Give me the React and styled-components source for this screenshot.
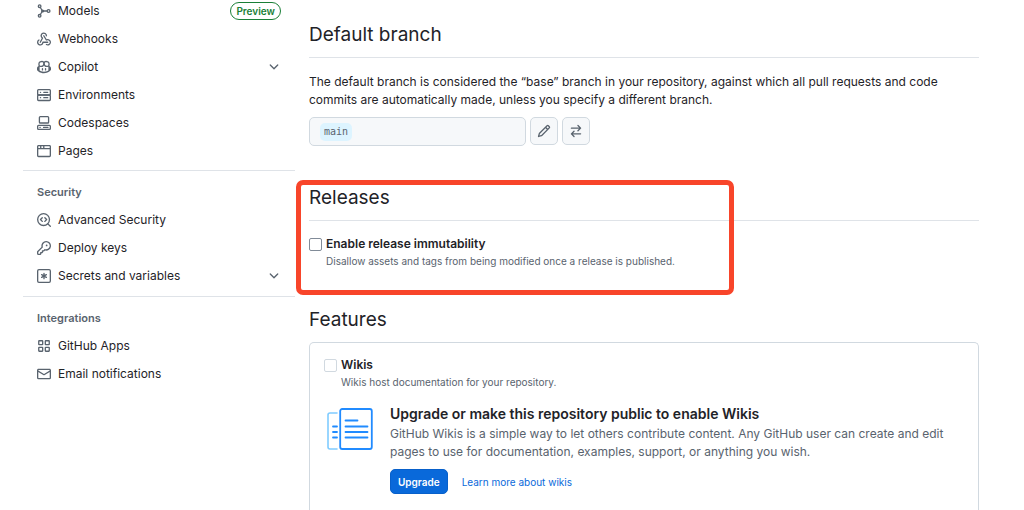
import React, { useState } from 'react';
import styled, { createGlobalStyle } from 'styled-components';

const GlobalStyle = createGlobalStyle`
  * {
    box-sizing: border-box;
  }

  body {
    margin: 0;
    background: #ffffff;
    color: #1f2328;
    font-family: Inter, 'Liberation Sans', sans-serif;
    font-size: 12px;
    line-height: 18px;
  }
`;

const Page = styled.div`
  display: grid;
  grid-template-columns: 272px minmax(0, 1fr);
  column-gap: 14px;
  min-height: 100vh;
  padding: 0 45px 0 23px;
`;

const Sidebar = styled.nav`
  display: flex;
  flex-direction: column;
`;

const NavGroup = styled.section`
  padding: ${(props) => (props.$first ? '1px 0 9px' : '11px 0 10px')};
  border-bottom: ${(props) => (props.$last ? 'none' : '1px solid #dfe3e8')};
`;

const GroupTitle = styled.h3`
  margin: 0 0 8px;
  padding-left: 14px;
  color: #59636e;
  font-size: 11px;
  font-weight: 600;
  line-height: 20px;
`;

const NavList = styled.ul`
  display: flex;
  flex-direction: column;
  gap: 8px;
  margin: 0;
  padding: 0;
  list-style: none;
`;

const NavLink = styled.a`
  display: flex;
  align-items: center;
  gap: 7px;
  height: 20px;
  padding: 0 14px;
  color: #1f2328;
  font-size: 12px;
  text-decoration: none;

  svg {
    flex: none;
    color: #59636e;
  }

  .end {
    margin-left: auto;
  }
`;

const PreviewLabel = styled.span`
  height: 18px;
  margin-left: auto;
  padding: 0 5px;
  border: 1px solid #1a7f37;
  border-radius: 9px;
  color: #1a7f37;
  font-size: 10px;
  font-weight: 600;
  line-height: 16px;
`;

const Main = styled.main`
  display: flex;
  flex-direction: column;
  padding-top: 21px;
`;

const Heading = styled.h2`
  margin: 0;
  padding-bottom: 8px;
  border-bottom: ${(props) => (props.$plain ? 'none' : '1px solid #dfe3e8')};
  font-size: 19px;
  font-weight: 400;
  line-height: 28px;
`;

const Section = styled.section`
  position: relative;
  display: flex;
  flex-direction: column;
`;

const Intro = styled.p`
  margin: 15px 0 8px;
`;

const BranchRow = styled.div`
  display: flex;
  gap: 4px;
  margin-bottom: 38px;
`;

const BranchField = styled.div`
  display: flex;
  align-items: center;
  width: 217px;
  height: 29px;
  padding: 0 10px;
  border: 1px solid #d1d9e0;
  border-radius: 5px;
  background: #f6f8fa;
`;

const BranchName = styled.code`
  padding: 0 4px;
  border-radius: 5px;
  background: #ddf4ff;
  color: #59636e;
  font-family: 'DejaVu Sans Mono', 'Liberation Mono', monospace;
  font-size: 10px;
`;

const IconButton = styled.button`
  display: flex;
  align-items: center;
  justify-content: center;
  width: 28px;
  height: 28px;
  padding: 0;
  border: 1px solid #d1d9e0;
  border-radius: 5px;
  background: #f6f8fa;
  color: #59636e;
  cursor: pointer;
`;

/* Red frame drawn over the releases section */
const Highlight = styled.div`
  position: absolute;
  top: -4px;
  bottom: 11px;
  left: -13px;
  width: 438px;
  border: 5px solid #f8452a;
  border-radius: 7px;
  pointer-events: none;
`;

const Option = styled.div`
  display: grid;
  grid-template-columns: 13px 1fr;
  column-gap: 4px;
  align-items: center;

  label {
    font-weight: 600;
  }

  p {
    grid-column: 2;
    margin: 0;
    color: #59636e;
    font-size: 10px;
    line-height: 16px;
  }
`;

const Checkbox = styled.input`
  appearance: none;
  width: 13px;
  height: 13px;
  margin: 0;
  border: 1px solid #818b98;
  border-radius: 2px;
  background: #ffffff;

  &:checked {
    background: #0969da;
    border-color: #0969da;
  }

  &:disabled {
    border-color: #d1d9e0;
  }
`;

const ReleaseBody = styled.div`
  padding: 14px 0 37px;
`;

const FeatureCard = styled.div`
  flex: 1;
  padding: 13px 14px 0;
  border: 1px solid #d1d9e0;
  border-bottom: none;
  border-radius: 5px 5px 0 0;
`;

const Upsell = styled.div`
  display: flex;
  gap: 17px;
  margin-top: 14px;
  padding-left: 3px;

  > svg {
    flex: none;
    margin-top: 4px;
  }

  h4 {
    margin: 0;
    font-size: 14px;
    font-weight: 600;
    line-height: 20px;
  }

  p {
    margin: 1px 0 8px;
    color: #59636e;
  }
`;

const Actions = styled.div`
  display: flex;
  align-items: center;
  gap: 14px;

  a {
    color: #0969da;
    font-size: 10px;
    text-decoration: none;
  }
`;

const UpgradeButton = styled.button`
  height: 25px;
  padding: 0 7px;
  border: 1px solid #0860ca;
  border-radius: 5px;
  background: #0969da;
  color: #ffffff;
  font-family: inherit;
  font-size: 10px;
  font-weight: 600;
  cursor: pointer;
`;

const Icon = ({ children, className }) => (
  <svg className={className} width="14" height="14" viewBox="0 0 16 16" fill="currentColor" aria-hidden="true">
    {children}
  </svg>
);

const Lines = ({ children }) => (
  <g fill="none" stroke="currentColor" strokeWidth="1.5" strokeLinecap="round" strokeLinejoin="round">
    {children}
  </g>
);

const ModelIcon = () => (
  <Icon>
    <Lines>
      <circle cx="3" cy="2.5" r="1.5" />
      <circle cx="3" cy="13.5" r="1.5" />
      <circle cx="13.2" cy="8" r="1.6" />
      <path d="M3.8 4 6.3 8 3.8 12M6.5 8h5" />
    </Lines>
    <circle cx="6.4" cy="8" r="1.8" />
  </Icon>
);

const WebhookIcon = () => (
  <Icon>
    <path d="M5.5 4.25a2.25 2.25 0 0 1 4.5 0 .75.75 0 0 0 1.5 0 3.75 3.75 0 1 0-6.14 2.889l-2.272 4.258a.75.75 0 0 0 1.324.706L7 7.25a.75.75 0 0 0-.309-1.015A2.25 2.25 0 0 1 5.5 4.25Z" />
    <path d="M7.364 3.607a.75.75 0 0 1 1.03.257l2.608 4.349a3.75 3.75 0 1 1-.628 6.785.75.75 0 0 1 .752-1.299 2.25 2.25 0 1 0-.033-3.88.75.75 0 0 1-1.03-.256L7.107 4.636a.75.75 0 0 1 .257-1.03Z" />
    <path d="M2.9 8.776A.75.75 0 0 1 2.625 9.8 2.25 2.25 0 1 0 6 11.75a.75.75 0 0 1 .75-.751h5.5a.75.75 0 0 1 0 1.5H7.425a3.751 3.751 0 1 1-5.55-3.998.75.75 0 0 1 1.024.274Z" />
  </Icon>
);

const CopilotIcon = () => (
  <Icon>
    <path d="M7.998 15.035c-4.562 0-7.873-2.914-7.998-3.749V9.338c.085-.628.677-1.686 1.588-2.065.013-.07.024-.143.036-.218.029-.183.06-.384.126-.612-.201-.508-.254-1.084-.254-1.656 0-.87.128-1.769.693-2.484.579-.733 1.494-1.124 2.724-1.261 1.206-.134 2.262.034 2.944.765.05.053.096.108.139.165.044-.057.094-.112.143-.165.682-.731 1.738-.899 2.944-.765 1.23.137 2.145.528 2.724 1.261.566.715.693 1.614.693 2.484 0 .572-.053 1.148-.254 1.656.066.228.098.429.126.612.012.076.024.148.037.218.924.385 1.522 1.471 1.591 2.095v1.872c0 .766-3.351 3.795-8.002 3.795Zm0-1.485c2.28 0 4.584-1.11 5.002-1.433V7.862l-.023-.116c-.49.21-1.075.291-1.727.291-1.146 0-2.059-.327-2.71-.991A3.222 3.222 0 0 1 8 6.303a3.24 3.24 0 0 1-.544.743c-.65.664-1.563.991-2.71.991-.652 0-1.236-.081-1.727-.291l-.023.116v4.255c.419.323 2.722 1.433 5.002 1.433ZM6.762 2.83c-.193-.206-.637-.413-1.682-.297-1.019.113-1.479.404-1.713.7-.247.312-.369.789-.369 1.554 0 .793.129 1.171.308 1.371.162.181.519.379 1.442.379.853 0 1.339-.235 1.638-.54.315-.322.527-.827.617-1.553.117-.935-.037-1.395-.241-1.614Zm4.155-.297c-1.044-.116-1.488.091-1.681.297-.204.219-.359.679-.242 1.614.091.726.303 1.231.618 1.553.299.305.784.54 1.638.54.922 0 1.28-.198 1.442-.379.179-.2.308-.578.308-1.371 0-.765-.123-1.242-.37-1.554-.233-.296-.693-.587-1.713-.7Z" />
    <path d="M6.25 9.037a.75.75 0 0 1 .75.75v1.501a.75.75 0 0 1-1.5 0V9.787a.75.75 0 0 1 .75-.75Zm4.25.75v1.501a.75.75 0 0 1-1.5 0V9.787a.75.75 0 0 1 1.5 0Z" />
  </Icon>
);

const ServerIcon = () => (
  <Icon>
    <Lines>
      <rect x="0.75" y="1.75" width="14.5" height="6.25" rx="1" />
      <rect x="0.75" y="8" width="14.5" height="6.25" rx="1" />
      <path d="M7.75 4.9h4.5M7.75 11.1h4.5M3.9 4.9h.2M3.9 11.1h.2" />
    </Lines>
  </Icon>
);

const CodespacesIcon = () => (
  <Icon>
    <Lines>
      <rect x="2.75" y="0.75" width="10.5" height="7.25" rx="1" />
      <rect x="0.75" y="10.75" width="14.5" height="4.5" rx="1" />
      <path d="M7.5 13h5M3.4 13h.2" />
    </Lines>
  </Icon>
);

const BrowserIcon = () => (
  <Icon>
    <path d="M0 2.75C0 1.784.784 1 1.75 1h12.5c.966 0 1.75.784 1.75 1.75v10.5A1.75 1.75 0 0 1 14.25 15H1.75A1.75 1.75 0 0 1 0 13.25ZM14.5 6h-13v7.25c0 .138.112.25.25.25h12.5a.25.25 0 0 0 .25-.25Zm-6-3.5v2h6V2.75a.25.25 0 0 0-.25-.25ZM5 2.5v2h2v-2Zm-3.25 0a.25.25 0 0 0-.25.25V4.5h2v-2Z" />
  </Icon>
);

const CodescanIcon = () => (
  <Icon>
    <Lines>
      <circle cx="7.5" cy="7.5" r="6.75" />
      <path d="M12.4 12.4l2.8 2.8M6 5.4 4 7.5l2 2.1M9 5.4l2 2.1-2 2.1" />
    </Lines>
  </Icon>
);

const KeyIcon = () => (
  <Icon>
    <path d="M10.5 0a5.499 5.499 0 1 1-1.288 10.848l-.932.932a.749.749 0 0 1-.53.22H7v.75a.749.749 0 0 1-.22.53l-.5.5a.749.749 0 0 1-.53.22H5v.75a.749.749 0 0 1-.22.53l-.5.5a.749.749 0 0 1-.53.22h-2A1.75 1.75 0 0 1 0 14.25v-2c0-.199.079-.389.22-.53l4.932-4.932A5.5 5.5 0 0 1 10.5 0Zm-4 5.5c-.001.431.069.86.205 1.269a.75.75 0 0 1-.181.768L1.5 12.56v1.69c0 .138.112.25.25.25h1.69l.06-.06v-1.19a.75.75 0 0 1 .75-.75h1.19l.06-.06v-1.19a.75.75 0 0 1 .75-.75h1.19l1.023-1.025a.75.75 0 0 1 .768-.18A4 4 0 1 0 6.5 5.5ZM11 6a1 1 0 1 1 0-2 1 1 0 0 1 0 2Z" />
  </Icon>
);

const AsteriskIcon = () => (
  <Icon>
    <Lines>
      <rect x="0.75" y="0.75" width="14.5" height="14.5" rx="1.5" />
      <path d="M8 4.9v6.2M5.3 6.45l5.4 3.1M5.3 9.55l5.4-3.1" />
    </Lines>
  </Icon>
);

const AppsIcon = () => (
  <Icon>
    <Lines>
      <rect x="2" y="2" width="4.5" height="4.5" rx="0.5" />
      <rect x="9.5" y="2" width="4.5" height="4.5" rx="0.5" />
      <rect x="2" y="9.5" width="4.5" height="4.5" rx="0.5" />
      <rect x="9.5" y="9.5" width="4.5" height="4.5" rx="0.5" />
    </Lines>
  </Icon>
);

const MailIcon = () => (
  <Icon>
    <path d="M1.75 2h12.5c.966 0 1.75.784 1.75 1.75v8.5A1.75 1.75 0 0 1 14.25 14H1.75A1.75 1.75 0 0 1 0 12.25v-8.5C0 2.784.784 2 1.75 2ZM1.5 12.251c0 .138.112.25.25.25h12.5a.25.25 0 0 0 .25-.25V5.809L8.38 9.397a.75.75 0 0 1-.76 0L1.5 5.809v6.442Zm13-8.181v-.32a.25.25 0 0 0-.25-.25H1.75a.25.25 0 0 0-.25.25v.32L8 7.88Z" />
  </Icon>
);

const ChevronIcon = () => (
  <Icon className="end">
    <path d="M12.78 5.22a.749.749 0 0 1 0 1.06l-4.25 4.25a.749.749 0 0 1-1.06 0L3.22 6.28a.749.749 0 1 1 1.06-1.06L8 8.939l3.72-3.719a.749.749 0 0 1 1.06 0Z" />
  </Icon>
);

const PencilIcon = () => (
  <Icon>
    <path d="M11.013 1.427a1.75 1.75 0 0 1 2.474 0l1.086 1.086a1.75 1.75 0 0 1 0 2.474l-8.61 8.61c-.21.21-.47.364-.756.445l-3.251.93a.75.75 0 0 1-.927-.928l.929-3.25c.081-.286.235-.547.445-.758l8.61-8.61Zm.176 4.823L9.75 4.81l-6.286 6.287a.253.253 0 0 0-.064.108l-.558 1.953 1.953-.558a.253.253 0 0 0 .108-.064Zm1.238-3.763a.25.25 0 0 0-.354 0L10.811 3.75l1.439 1.44 1.263-1.263a.25.25 0 0 0 0-.354Z" />
  </Icon>
);

const SwitchIcon = () => (
  <Icon>
    <path d="M5.22 14.78a.75.75 0 0 0 1.06-1.06L4.56 12h8.69a.75.75 0 0 0 0-1.5H4.56l1.72-1.72a.75.75 0 0 0-1.06-1.06l-3 3a.75.75 0 0 0 0 1.06l3 3Zm5.56-6.5a.75.75 0 1 1-1.06-1.06l1.72-1.72H2.75a.75.75 0 0 1 0-1.5h8.69L9.72 2.28a.75.75 0 0 1 1.06-1.06l3 3a.75.75 0 0 1 0 1.06l-3 3Z" />
  </Icon>
);

const WikiArt = () => (
  <svg width="46" height="42" viewBox="0 0 46 42" fill="none" strokeLinecap="round" aria-hidden="true">
    <path d="M10 5H3a2 2 0 0 0-2 2v32a2 2 0 0 0 2 2h7" stroke="#80ccff" strokeWidth="1.6" />
    <rect x="13.2" y="1" width="31.6" height="40" rx="2" stroke="#218bff" strokeWidth="1.8" />
    <path
      d="M18.5 12.5h12M18.5 18.5h22M18.5 24h22M18.5 29.5h22M6 18.5h4M6 24h4M6 29.5h4"
      stroke="#218bff"
      strokeWidth="1.8"
    />
  </svg>
);

const groups = [
  {
    items: [
      { label: 'Models', icon: ModelIcon, preview: true },
      { label: 'Webhooks', icon: WebhookIcon },
      { label: 'Copilot', icon: CopilotIcon, expandable: true },
      { label: 'Environments', icon: ServerIcon },
      { label: 'Codespaces', icon: CodespacesIcon },
      { label: 'Pages', icon: BrowserIcon },
    ],
  },
  {
    title: 'Security',
    items: [
      { label: 'Advanced Security', icon: CodescanIcon },
      { label: 'Deploy keys', icon: KeyIcon },
      { label: 'Secrets and variables', icon: AsteriskIcon, expandable: true },
    ],
  },
  {
    title: 'Integrations',
    items: [
      { label: 'GitHub Apps', icon: AppsIcon },
      { label: 'Email notifications', icon: MailIcon },
    ],
  },
];

const SettingsNav = () => (
  <Sidebar>
    {groups.map((group, index) => (
      <NavGroup key={index} $first={index === 0} $last={index === groups.length - 1}>
        {group.title && <GroupTitle>{group.title}</GroupTitle>}
        <NavList>
          {group.items.map(({ label, icon: ItemIcon, preview, expandable }) => (
            <li key={label}>
              <NavLink href="#">
                <ItemIcon />
                {label}
                {preview && <PreviewLabel>Preview</PreviewLabel>}
                {expandable && <ChevronIcon />}
              </NavLink>
            </li>
          ))}
        </NavList>
      </NavGroup>
    ))}
  </Sidebar>
);

const App = () => {
  const [immutable, setImmutable] = useState(false);

  return (
    <>
      <GlobalStyle />
      <Page>
        <SettingsNav />
        <Main>
          <Section>
            <Heading>Default branch</Heading>
            <Intro>
              The default branch is considered the “base” branch in your repository, against which all pull requests and code
              commits are automatically made, unless you specify a different branch.
            </Intro>
            <BranchRow>
              <BranchField>
                <BranchName>main</BranchName>
              </BranchField>
              <IconButton type="button" aria-label="Rename branch">
                <PencilIcon />
              </IconButton>
              <IconButton type="button" aria-label="Switch to another branch">
                <SwitchIcon />
              </IconButton>
            </BranchRow>
          </Section>

          <Section>
            <Heading>Releases</Heading>
            <ReleaseBody>
              <Option>
                <Checkbox
                  type="checkbox"
                  id="immutability"
                  checked={immutable}
                  onChange={(e) => setImmutable(e.target.checked)}
                />
                <label htmlFor="immutability">Enable release immutability</label>
                <p>Disallow assets and tags from being modified once a release is published.</p>
              </Option>
            </ReleaseBody>
            <Highlight />
          </Section>

          <Heading $plain>Features</Heading>
          <FeatureCard>
            <Option>
              <Checkbox type="checkbox" id="wikis" disabled />
              <label htmlFor="wikis">Wikis</label>
              <p>Wikis host documentation for your repository.</p>
            </Option>
            <Upsell>
              <WikiArt />
              <div>
                <h4>Upgrade or make this repository public to enable Wikis</h4>
                <p>
                  GitHub Wikis is a simple way to let others contribute content. Any GitHub user can create and edit
                  pages to use for documentation, examples, support, or anything you wish.
                </p>
                <Actions>
                  <UpgradeButton type="button">Upgrade</UpgradeButton>
                  <a href="#">Learn more about wikis</a>
                </Actions>
              </div>
            </Upsell>
          </FeatureCard>
        </Main>
      </Page>
    </>
  );
};

export default App;
